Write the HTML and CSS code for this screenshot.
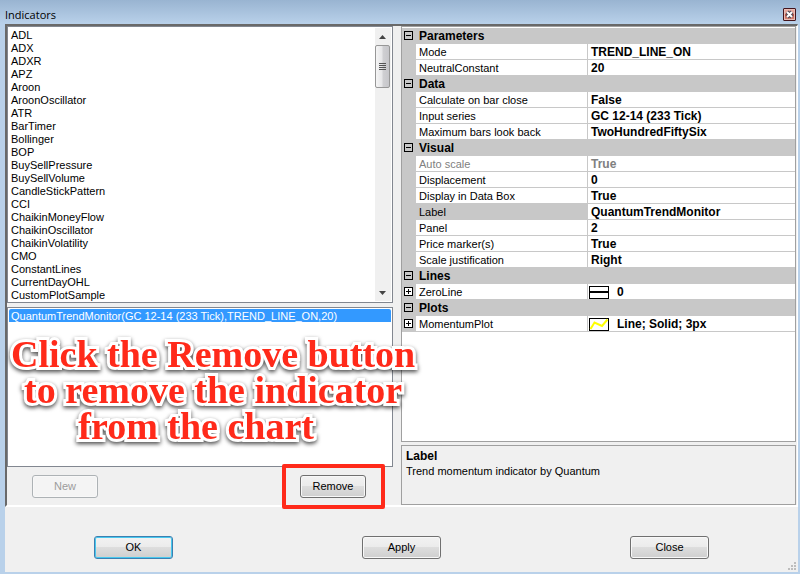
FILE: index.html
```html
<!DOCTYPE html>
<html lang="en">
<head>
  <meta charset="UTF-8">
  <meta name="viewport" content="width=device-width, initial-scale=1">
  <title>Indicators</title>
  <link rel="stylesheet" href="styles.css">
</head>
<body>

  <div class="window">
    <header class="titlebar">
      <h1>Indicators</h1>
      <button class="close-x" aria-label="Close window">
        <svg width="13" height="13" viewBox="0 0 13 13">
          <path d="M4 4l5 5M9 4L4 9" stroke="#4d4552" stroke-width="4"/>
          <path d="M4 4l5 5M9 4L4 9" stroke="#fff" stroke-width="2"/>
        </svg>
      </button>
    </header>

    <main class="panels">
      <section class="left">
        <div class="available">
          <select class="list" size="21" aria-label="Available indicators">
            <option>ADL</option>
            <option>ADX</option>
            <option>ADXR</option>
            <option>APZ</option>
            <option>Aroon</option>
            <option>AroonOscillator</option>
            <option>ATR</option>
            <option>BarTimer</option>
            <option>Bollinger</option>
            <option>BOP</option>
            <option>BuySellPressure</option>
            <option>BuySellVolume</option>
            <option>CandleStickPattern</option>
            <option>CCI</option>
            <option>ChaikinMoneyFlow</option>
            <option>ChaikinOscillator</option>
            <option>ChaikinVolatility</option>
            <option>CMO</option>
            <option>ConstantLines</option>
            <option>CurrentDayOHL</option>
            <option>CustomPlotSample</option>
          </select>
          <div class="scrollbar">
            <svg class="arrow" width="15" height="17" viewBox="0 0 15 17"><path d="M4 11l3.500-4 3.500 4z" fill="#444"/></svg>
            <div class="thumb"><i></i><i></i><i></i><i></i></div>
            <svg class="arrow down" width="15" height="17" viewBox="0 0 15 17"><path d="M4 7h7l-3.500 4z" fill="#444"/></svg>
          </div>
        </div>

        <div class="applied">
          <select class="list" size="2" aria-label="Applied indicators">
            <option selected>QuantumTrendMonitor(GC 12-14 (233 Tick),TREND_LINE_ON,20)</option>
          </select>
          <p class="note">
            <span>Click the Remove button</span>
            <span>to remove the indicator</span>
            <span class="last">from the chart</span>
          </p>
        </div>

        <div class="list-buttons">
          <button class="btn small" disabled>New</button>
          <div class="marked"><button class="btn small">Remove</button></div>
        </div>
      </section>

      <section class="right">
        <div class="grid">
          <table class="props">
            <colgroup><col class="c-toggle"><col class="c-name"><col></colgroup>
            <tr class="group"><td><button class="toggle" aria-label="Collapse Parameters"></button></td><th colspan="2">Parameters</th></tr>
            <tr><td></td><th>Mode</th><td>TREND_LINE_ON</td></tr>
            <tr><td></td><th>NeutralConstant</th><td>20</td></tr>
            <tr class="group"><td><button class="toggle" aria-label="Collapse Data"></button></td><th colspan="2">Data</th></tr>
            <tr><td></td><th>Calculate on bar close</th><td>False</td></tr>
            <tr><td></td><th>Input series</th><td>GC 12-14 (233 Tick)</td></tr>
            <tr><td></td><th>Maximum bars look back</th><td>TwoHundredFiftySix</td></tr>
            <tr class="group"><td><button class="toggle" aria-label="Collapse Visual"></button></td><th colspan="2">Visual</th></tr>
            <tr class="readonly"><td></td><th>Auto scale</th><td>True</td></tr>
            <tr><td></td><th>Displacement</th><td>0</td></tr>
            <tr><td></td><th>Display in Data Box</th><td>True</td></tr>
            <tr class="current"><td></td><th>Label</th><td>QuantumTrendMonitor</td></tr>
            <tr><td></td><th>Panel</th><td>2</td></tr>
            <tr><td></td><th>Price marker(s)</th><td>True</td></tr>
            <tr><td></td><th>Scale justification</th><td>Right</td></tr>
            <tr class="group"><td><button class="toggle" aria-label="Collapse Lines"></button></td><th colspan="2">Lines</th></tr>
            <tr>
              <td><button class="toggle plus" aria-label="Expand ZeroLine"></button></td>
              <th>ZeroLine</th>
              <td class="with-swatch"><div class="swatch-row">
                <svg width="20" height="13" viewBox="0 0 20 13"><rect x=".5" y=".5" width="19" height="12" fill="#fff" stroke="#000"/><path d="M1 6h18" stroke="#000" stroke-width="2"/></svg>
                0
              </div></td>
            </tr>
            <tr class="group"><td><button class="toggle" aria-label="Collapse Plots"></button></td><th colspan="2">Plots</th></tr>
            <tr>
              <td><button class="toggle plus" aria-label="Expand MomentumPlot"></button></td>
              <th>MomentumPlot</th>
              <td class="with-swatch"><div class="swatch-row">
                <svg width="20" height="13" viewBox="0 0 20 13"><rect x=".5" y=".5" width="19" height="12" fill="#fff" stroke="#000"/><path d="M1.500 11L5.500 4.500 13 8l5.500-6.500" fill="none" stroke="#ff0" stroke-width="2"/></svg>
                Line; Solid; 3px
              </div></td>
            </tr>
          </table>
        </div>

        <div class="help">
          <h2>Label</h2>
          <p>Trend momentum indicator by Quantum</p>
        </div>
      </section>
    </main>

    <footer class="actions">
      <button class="btn default">OK</button>
      <button class="btn">Apply</button>
      <button class="btn">Close</button>
      <svg class="grip" width="9" height="9" viewBox="0 0 9 9"><path d="M6 0h2v2H6zM3 3h2v2H3zM6 3h2v2H6zM0 6h2v2H0zM3 6h2v2H3zM6 6h2v2H6z" fill="#bdbdbd"/></svg>
    </footer>
  </div>

</body>
</html>
```
FILE: styles.css
```css
* {
  box-sizing: border-box;
}

body {
  margin: 0;
  font-family: "Liberation Sans", Arial, sans-serif;
  font-size: 11px;
  line-height: 13px;
  color: #000;
}

h1, h2, p {
  margin: 0;
}

button, select {
  font: inherit;
  color: inherit;
}

.window {
  display: flex;
  flex-direction: column;
  min-height: 100vh;
  padding: 0 2px 2px 5px;
  background: linear-gradient(#99b4d1, #b9d1ea 24px);
}

.titlebar {
  display: flex;
  justify-content: space-between;
  align-items: center;
  height: 24px;
  padding: 5px 2px 0 0;
}

.titlebar h1 {
  font: 11px/16px "Open Sans", sans-serif;
}

.close-x {
  width: 13px;
  height: 13px;
  padding: 0;
  border: 1px solid #43141c;
  border-radius: 1px;
  background: linear-gradient(#e5a59b 45%, #bd5141 50%, #d98d7d);
  box-shadow: inset 0 0 0 1px #e9bdb6;
}

.close-x svg {
  display: block;
  margin: -1px;
}

.panels {
  flex: 1;
  display: flex;
  gap: 8px;
  padding-right: 1px;
  border: solid;
  border-width: 2px 1px 2px 2px;
  border-color: #696969 #fff #fff #696969;
  background: #f0f0f0;
}

.left {
  flex: 386;
  min-width: 0;
  display: flex;
  flex-direction: column;
}

.available, .applied {
  border: 1px solid #828790;
  background: #fff;
}

.available {
  display: flex;
  padding: 1px;
  margin-bottom: 4px;
}

.applied {
  position: relative;
  flex: 1;
  display: flex;
  padding: 1px;
}

.list {
  flex: 1;
  min-width: 0;
  height: 273px;
  padding: 0;
  border: none;
  outline: none;
  background: #fff;
  overflow: hidden;
}

.applied .list {
  height: auto;
}

.list option {
  min-height: 13px;
  height: 13px;
  padding: 1px 2px 0;
  line-height: 12px;
}

.list option:checked {
  background: linear-gradient(#39f, #39f);
  -webkit-text-fill-color: #fff;
}

.scrollbar {
  display: flex;
  flex-direction: column;
  width: 16px;
  background: #f0f0f0;
}

.arrow.down {
  margin-top: auto;
}

.thumb {
  display: flex;
  flex-direction: column;
  align-items: center;
  justify-content: center;
  gap: 1px;
  width: 15px;
  height: 43px;
  border: 1px solid #979797;
  border-radius: 2px;
  background: linear-gradient(90deg, #f5f5f5, #e6e6e8 45%, #cfcfd2 55%, #c6c6ca);
}

.thumb i {
  width: 7px;
  height: 1px;
  background: #555;
}

.list-buttons {
  display: flex;
  justify-content: space-between;
  padding: 8px 27px 7px 25px;
}

.btn {
  width: 79px;
  height: 23px;
  padding: 0;
  border: 1px solid #707070;
  border-radius: 3px;
  background: linear-gradient(#f2f2f2, #ebebeb 50%, #ddd 50%, #cfcfcf);
  box-shadow: inset 0 0 0 1px #f8f8f8;
}

.btn.small {
  display: block;
  width: 66px;
}

.btn:disabled {
  border-color: #adb2b5;
  background: #f4f4f4;
  color: #9c9c9c;
}

.btn.default {
  border-color: #3c7fb1;
  box-shadow: inset 0 0 0 1px #48c8ee;
}

/* callout drawn over the dialog */
.marked {
  position: relative;
  z-index: 1;
}

.marked::after {
  content: "";
  position: absolute;
  inset: -11px -19px -11px -18px;
  border: 4px solid #ff2a1a;
  border-radius: 2px;
  pointer-events: none;
}

.note {
  position: absolute;
  top: 28px;
  left: 3px;
  z-index: 1;
  text-align: center;
  white-space: nowrap;
  font: bold 38px/36px "Liberation Serif", Georgia, serif;
  color: #ff2a1a;
  -webkit-text-stroke: 6px #fff;
  paint-order: stroke fill;
  stroke-linejoin: round;
  filter: drop-shadow(0 2px 2px rgba(0, 0, 0, 0.7));
  pointer-events: none;
}

.note span {
  display: block;
}

.note .last {
  padding-right: 34px;
}

.right {
  flex: 395;
  min-width: 0;
  display: flex;
  flex-direction: column;
  gap: 3px;
}

.grid {
  flex: 1;
  padding-top: 1px;
  border: 1px solid #a0a0a0;
  background: #fff;
}

.props {
  width: 100%;
  table-layout: fixed;
  border-collapse: separate;
  border-spacing: 0;
}

.c-toggle {
  width: 14px;
}

.c-name {
  width: 172px;
}

.props tr {
  height: 16px;
}

.props td, .props th {
  height: 16px;
  padding: 1px 3px 0;
  border-bottom: 1px solid #c8c8c8;
  line-height: 14px;
  text-align: left;
  white-space: nowrap;
  overflow: hidden;
}

.props th {
  font-weight: normal;
  border-right: 1px solid #c8c8c8;
}

.props td {
  font-size: 12px;
  font-weight: bold;
}

.props td:first-child {
  padding: 0 0 0 2px;
  background: #c8c8c8;
}

.props .group th {
  font-size: 12px;
  font-weight: bold;
  background: #c8c8c8;
}

.props .current th {
  background: #c8c8c8;
}

.props .readonly th, .props .readonly td {
  color: #808080;
}

.toggle {
  display: block;
  width: 9px;
  height: 9px;
  padding: 0;
  border: 1px solid #000;
  background: linear-gradient(#000, #000) center / 5px 1px no-repeat;
}

.toggle.plus {
  background:
    linear-gradient(#000, #000) center / 5px 1px no-repeat,
    linear-gradient(#000, #000) center / 1px 5px no-repeat,
    #fff;
}

.props .with-swatch {
  padding-left: 1px;
}

.swatch-row {
  display: flex;
  align-items: center;
  gap: 8px;
  height: 14px;
}

.help {
  height: 60px;
  padding: 3px 4px;
  border: 1px solid #a0a0a0;
}

.help h2 {
  font-size: 12px;
  line-height: 14px;
}

.help p {
  line-height: 16px;
}

.actions {
  position: relative;
  display: flex;
  justify-content: space-between;
  padding: 29px 89px 13px;
  background: #f0f0f0;
}

.grip {
  position: absolute;
  right: 1px;
  bottom: 1px;
}
```
